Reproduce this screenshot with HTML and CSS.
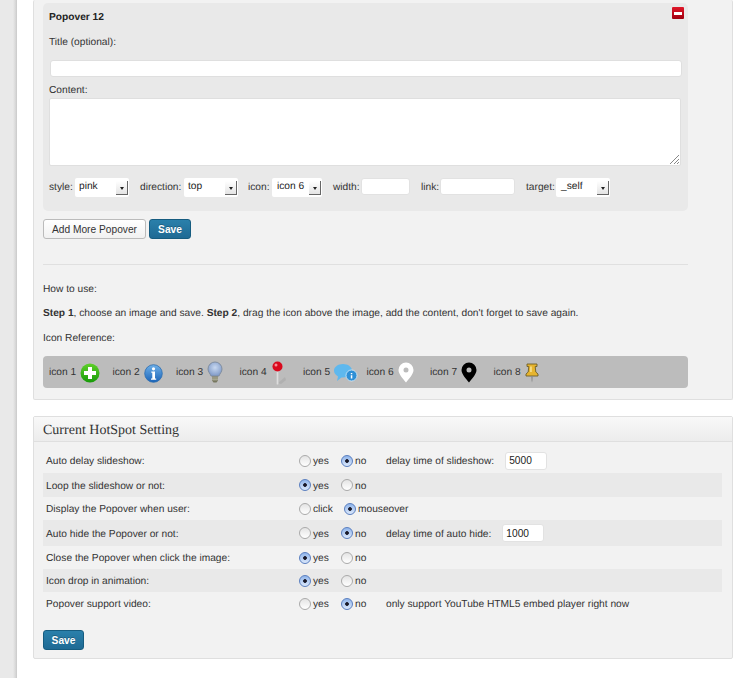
FILE: index.html
```html
<!DOCTYPE html>
<html lang="en">
<head>
<meta charset="utf-8">
<title>HotSpot Settings</title>
<link rel="stylesheet" href="styles.css">
</head>
<body>
<div class="sidebar"></div>
<main class="main">
  <section class="panel panel-top">
    <div class="popover">
      <div class="pop-head"><strong>Popover 12</strong><span class="remove"><span></span></span></div>
      <label class="lab lab-title">Title (optional):</label>
      <input class="field-title" type="text">
      <label class="lab lab-content">Content:</label>
      <div class="textarea">
        <svg class="grip" width="11" height="11" viewBox="0 0 11 11"><path d="M1 10L10 1M5 10L10 5M8 10L10 8" stroke="#888" stroke-width="1" fill="none"/></svg>
      </div>
      <div class="opts">
        <span class="opt o1">style:<span class="sel s-style">pink<i class="arr"></i></span></span>
        <span class="opt o2">direction:<span class="sel s-dir">top<i class="arr"></i></span></span>
        <span class="opt o3">icon:<span class="sel s-icon">icon 6<i class="arr"></i></span></span>
        <span class="opt o4">width:<input class="inp i-width" type="text"></span>
        <span class="opt o5">link:<input class="inp i-link" type="text"></span>
        <span class="opt o6">target:<span class="sel s-target">_self<i class="arr"></i></span></span>
      </div>
    </div>
    <div class="actions">
      <button class="btn" type="button">Add More Popover</button>
      <button class="btn primary" type="button">Save</button>
    </div>
    <hr class="rule">
    <p class="how">How to use:</p>
    <p class="how steps"><b>Step 1</b>, choose an image and save. <b>Step 2</b>, drag the icon above the image, add the content, don't forget to save again.</p>
    <p class="how ref">Icon Reference:</p>
    <div class="iconbar">
      <span class="ic">icon 1
        <svg width="20" height="20" viewBox="0 0 20 20"><defs><linearGradient id="g1" x1="0" y1="0" x2="0" y2="1"><stop offset="0" stop-color="#5fd02a"/><stop offset="1" stop-color="#169a08"/></linearGradient></defs><circle cx="10" cy="10" r="9.5" fill="url(#g1)"/><path d="M8 4h4v4h4v4h-4v4H8v-4H4V8h4z" fill="#fff"/></svg></span>
      <span class="ic">icon 2
        <svg width="19" height="20" viewBox="0 0 19 20"><defs><linearGradient id="g2" x1="0" y1="0" x2="0" y2="1"><stop offset="0" stop-color="#6fb0e8"/><stop offset="1" stop-color="#1a63b8"/></linearGradient></defs><circle cx="9.500" cy="10.500" r="8.800" fill="url(#g2)" stroke="#2a6cb0" stroke-width=".8"/><circle cx="9.500" cy="5.800" r="1.600" fill="#fff"/><path d="M7.300 8.600h3.700v7h1.200v1.200H7v-1.200h1.300V9.800h-1z" fill="#fff"/></svg></span>
      <span class="ic">icon 3
        <svg width="16" height="23" viewBox="0 0 16 23"><defs><radialGradient id="g3" cx=".5" cy=".4" r=".6"><stop offset="0" stop-color="#c8d8f0"/><stop offset="1" stop-color="#7f9ac8"/></radialGradient></defs><path d="M8 1a7 7 0 0 0-7 7c0 3 2.200 4.500 3 7h8c.8-2.500 3-4 3-7a7 7 0 0 0-7-7z" fill="url(#g3)" stroke="#7d8a9c" stroke-width=".9"/><path d="M5 15.500h6v4l-1.500 2h-3L5 19.500z" fill="#77775f"/><path d="M5 17h6M5 18.800h6" stroke="#d8d8c8" stroke-width=".7"/></svg></span>
      <span class="ic">icon 4
        <svg width="16" height="24" viewBox="0 0 16 24"><path d="M7 22l7-6 1 3-5 4z" fill="#a8a8a8" opacity=".6"/><path d="M5.500 8h2v15l-1 1-1-1z" fill="#ddd" stroke="#bdbdbd" stroke-width=".4"/><circle cx="6.500" cy="5.500" r="5" fill="#d9091d"/><circle cx="5" cy="4" r="1.500" fill="#f78c95"/></svg></span>
      <span class="ic">icon 5
        <svg width="24" height="20" viewBox="0 0 24 20"><path d="M9 1c5 0 9 2.800 9 6.800 0 4-4 6.700-9 6.700H7.500L3 18l1-4.500C1.800 12.200 0 10.300 0 7.800 0 3.800 4 1 9 1z" fill="#5eb8ee"/><circle cx="17.500" cy="12.500" r="5.500" fill="#2e8fd6" stroke="#d9eefb" stroke-width=".8"/><path d="M16.800 10h1.500v1.300h-1.500zM16.800 12.200h1.500v3.300h-1.500z" fill="#fff"/></svg></span>
      <span class="ic">icon 6
        <svg width="16" height="21" viewBox="0 0 16 21"><path fill-rule="evenodd" d="M8 .5a7.500 7.500 0 0 1 7.500 7.500c0 4.500-5 9-7.500 12.500C5.500 17 .5 12.500.5 8A7.500 7.500 0 0 1 8 .5zm0 5a2.500 2.500 0 1 0 0 5 2.500 2.500 0 0 0 0-5z" fill="#fff"/></svg></span>
      <span class="ic">icon 7
        <svg width="16" height="21" viewBox="0 0 16 21"><path fill-rule="evenodd" d="M8 .5a7.500 7.500 0 0 1 7.500 7.500c0 4.500-5 9-7.500 12.500C5.500 17 .5 12.500.5 8A7.500 7.500 0 0 1 8 .5zm0 5a2.500 2.500 0 1 0 0 5 2.500 2.500 0 0 0 0-5z" fill="#000"/></svg></span>
      <span class="ic">icon 8
        <svg width="14" height="20" viewBox="0 0 14 20"><path d="M2 1h10v2.500h-1.800l.6 5.500 2.200 2v2H1v-2l2.200-2 .6-5.500H2z" fill="#e6b42e" stroke="#6e5f28" stroke-width=".9"/><path d="M6.200 13h1.600l-.4 5-.4 1.500-.4-1.500z" fill="#8c8c8c"/><path d="M5.200 3.500h1.500V9H5.200z" fill="#f8e59a"/></svg></span>
    </div>
  </section>

  <section class="panel panel-settings">
    <h3 class="panel-title">Current HotSpot Setting</h3>
    <div class="rows">
      <div class="row r1"><span class="name">Auto delay slideshow:</span><span class="choice"><i class="radio"></i>yes</span><span class="choice c2"><i class="radio on"></i>no</span><span class="extra">delay time of slideshow:<input class="inp i-delay" type="text" value="5000"></span></div>
      <div class="row alt r2"><span class="name">Loop the slideshow or not:</span><span class="choice"><i class="radio on"></i>yes</span><span class="choice c2"><i class="radio"></i>no</span></div>
      <div class="row r3"><span class="name">Display the Popover when user:</span><span class="choice"><i class="radio"></i>click</span><span class="choice c3"><i class="radio on"></i>mouseover</span></div>
      <div class="row alt r4"><span class="name">Auto hide the Popover or not:</span><span class="choice"><i class="radio"></i>yes</span><span class="choice c2"><i class="radio on"></i>no</span><span class="extra">delay time of auto hide:<input class="inp i-hide" type="text" value="1000"></span></div>
      <div class="row r5"><span class="name">Close the Popover when click the image:</span><span class="choice"><i class="radio on"></i>yes</span><span class="choice c2"><i class="radio"></i>no</span></div>
      <div class="row alt r6"><span class="name">Icon drop in animation:</span><span class="choice"><i class="radio on"></i>yes</span><span class="choice c2"><i class="radio"></i>no</span></div>
      <div class="row r7"><span class="name">Popover support video:</span><span class="choice"><i class="radio"></i>yes</span><span class="choice c2"><i class="radio on"></i>no</span><span class="extra">only support YouTube HTML5 embed player right now</span></div>
    </div>
    <button class="btn primary save2" type="button">Save</button>
  </section>
</main>
</body>
</html>
```
FILE: styles.css
```css
* { box-sizing: border-box; }
html, body { height: 100%; }
body {
  margin: 0;
  height: 678px;
  overflow: hidden;
  display: flex;
  background: #fff;
  font-family: "Liberation Sans", Arial, sans-serif;
  font-size: 10.2px;
  text-rendering: geometricPrecision;
  color: #333;
}
.sidebar {
  width: 17px;
  flex: none;
  background: linear-gradient(to right, #e9e9e9 0, #e9e9e9 13px, #d4d4d4 16px, #c8c8c8 17px);
}
.main { width: 716px; padding-left: 16px; }
.panel {
  width: 700px;
  background: #f2f2f2;
  border: 1px solid #dfdfdf;
  border-radius: 2px;
}
.panel-top {
  height: 400px;
  border-top: 0;
  padding: 3px 9px 0;
}
.popover {
  width: 645px;
  height: 208px;
  background: #e9e9e9;
  border-radius: 5px;
  padding: 0 6px;
  position: relative;
}
.pop-head { height: 26px; padding-top: 9px; line-height: 12px; color: #222; }
.remove {
  position: absolute;
  top: 4px;
  right: 4px;
  width: 12px;
  height: 12px;
  border-radius: 1px;
  background: linear-gradient(#e0182a, #a00010);
  display: flex;
  align-items: center;
  justify-content: center;
}
.remove span { width: 8px; height: 3px; background: #fff; }
.lab { display: block; line-height: 14px; }
.lab-title { margin-top: 7px; }
.field-title {
  display: block;
  width: 632px;
  height: 17px;
  margin: 10px 0 0 1px;
  border: 1px solid #dfdfdf;
  border-radius: 3px;
  background: #fff;
}
.lab-content { margin-top: 7px; }
.textarea {
  position: relative;
  width: 632px;
  height: 68px;
  background: #fff;
  border: 1px solid #dfdfdf;
  border-radius: 2px;
}
.grip { position: absolute; right: 0; bottom: 0; }
.opts { display: flex; align-items: center; height: 19px; margin-top: 12px; white-space: nowrap; }
.opt { display: inline-flex; align-items: center; justify-content: space-between; flex: none; }
.o1 { width: 91px; padding-right: 11px; }
.o2 { width: 108px; padding-right: 10px; }
.o3 { width: 85px; padding-right: 11px; }
.o4 { width: 88px; padding-right: 11px; }
.o5 { width: 105px; padding-right: 11px; }
.o6 { width: 84px; }
.sel {
  position: relative;
  display: inline-block;
  height: 19px;
  line-height: 17px;
  padding-left: 4px;
  background: #fff;
  border-radius: 2px;
  color: #222;
}
.s-style, .s-dir { width: 54px; }
.s-icon { width: 50px; padding-left: 5px; }
.s-target { width: 54px; padding-left: 5px; }
.arr {
  position: absolute;
  right: 1px;
  top: 3px;
  width: 12px;
  height: 14px;
  border-right: 1px solid #666;
  border-bottom: 1px solid #666;
  background: linear-gradient(#fff, #e4e4e4);
}
.arr::after {
  content: "";
  position: absolute;
  left: 4px;
  top: 6px;
  border: 2px solid transparent;
  border-top: 3px solid #222;
  border-bottom: 0;
}
.inp {
  height: 17px;
  padding: 0 3px;
  border: 1px solid #e2e2e2;
  border-radius: 3px;
  background: #fff;
  font: inherit;
  color: #222;
}
.opt .inp { margin-bottom: 2px; }
.i-width { width: 49px; }
.i-link { width: 75px; }
.actions { display: flex; gap: 3px; margin-top: 8px; }
.btn {
  height: 20px;
  padding: 0;
  border: 1px solid #bbb;
  border-radius: 3px;
  background: linear-gradient(#fff, #f1f1f1);
  font: inherit;
  color: #333;
}
.actions .btn { width: 103px; }
.actions .btn.primary { width: 42px; }
.btn.primary {
  border-color: #165c80;
  background: linear-gradient(#2a80ab, #1f6a94);
  color: #fff;
  font-weight: 700;
  text-shadow: 0 -1px 0 rgba(0,0,0,.25);
}
.rule { height: 1px; border: 0; background: #e0e0e0; margin: 25px 0 0; width: 645px; }
.how { margin: 0; line-height: 14px; color: #333; }
.how:first-of-type { margin-top: 18px; }
.steps { margin-top: 10px; }
.ref { margin-top: 11px; }
.iconbar {
  display: flex;
  align-items: center;
  width: 645px;
  height: 32px;
  margin-top: 10px;
  padding: 1px 0 0 6px;
  background: #bcbcbc;
  border-radius: 4px;
  white-space: nowrap;
}
.ic { display: inline-flex; align-items: center; gap: 4px; flex: none; width: 63.500px; }
.panel-settings { height: 243px; margin-top: 16px; padding: 0 9px; }
.panel-title {
  margin: 0 -9px;
  height: 25px;
  padding: 1px 9px 0;
  line-height: 25px;
  font-family: "Liberation Serif", "Times New Roman", serif;
  font-size: 14px;
  font-weight: 400;
  color: #333;
  background: linear-gradient(#f8f8f8, #ececec);
  border-bottom: 1px solid #dfdfdf;
}
.rows { width: 679px; margin-top: 6px; }
.row { display: flex; align-items: center; padding: 2px 0 0 3px; }
.row.alt { background: #e9e9e9; }
.r1 { height: 25px; }
.r2 { height: 24px; }
.r3 { height: 23px; }
.r4 { height: 26px; }
.r5 { height: 23px; }
.r6 { height: 23px; }
.r7 { height: 23px; }
.name { width: 253px; flex: none; }
.choice { display: inline-flex; align-items: center; width: 42px; flex: none; }
.c2 { width: 45px; }
.c3 { width: auto; margin-left: 3px; }
.radio {
  width: 12px;
  height: 12px;
  margin: 0 2px 2px 0;
  flex: none;
  border-radius: 50%;
  border: 1px solid #aaa;
  background: linear-gradient(#e4e4e4, #fff);
}
.radio.on {
  border-color: #5a7fc0;
  background: radial-gradient(circle, #1a1a2a 0, #1a1a2a 1.500px, transparent 2.200px), linear-gradient(#8fb4ea, #dbe8fb);
}
.extra { display: inline-flex; align-items: center; white-space: nowrap; }
.i-delay { width: 42px; height: 18px; margin: 0 0 2px 11px; }
.i-hide { width: 42px; height: 18px; margin: 0 0 2px 11px; }
.save2 { display: block; width: 41px; margin-top: 15px; }
```
